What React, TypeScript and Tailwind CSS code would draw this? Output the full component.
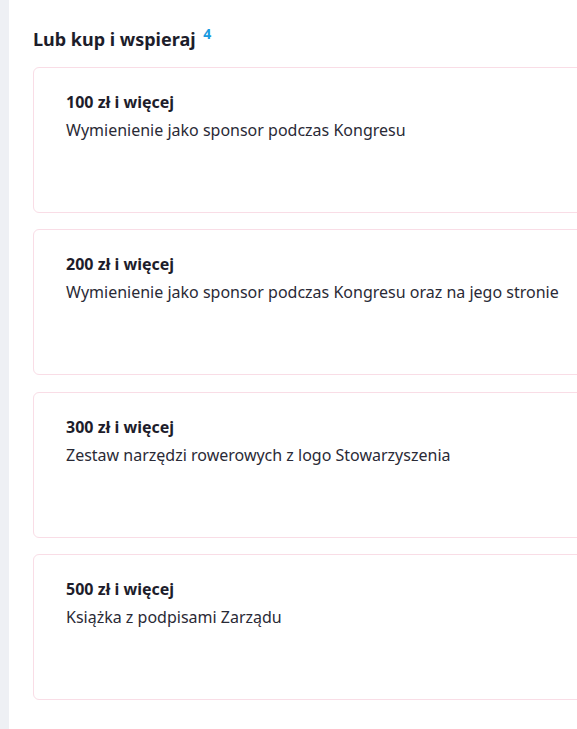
import React from 'react'

type Reward = {
    amount: number,
    description: string,
}

const rewards: Reward[] = [
    { amount: 100, description: 'Wymienienie jako sponsor podczas Kongresu' },
    { amount: 200, description: 'Wymienienie jako sponsor podczas Kongresu oraz na jego stronie' },
    { amount: 300, description: 'Zestaw narzędzi rowerowych z logo Stowarzyszenia' },
    { amount: 500, description: 'Książka z podpisami Zarządu' },
]

function RewardCard({ reward }: { reward: Reward }) {
  return (
    <div className='w-[600px] h-[146px] shrink-0 rounded-md border border-[#f9dde6] bg-white pl-[32px] pt-[23px]'>
      <p className='text-[16px] font-bold text-[#1d1d2b] leading-[22px]'>{reward.amount} zł i więcej</p>
      <p className='mt-[6px] text-[16px] text-[#2a2a36] leading-[22px]'>{reward.description}</p>
    </div>
  )
}

export default function App() {
  return (
    <div className='flex h-[729px] w-[577px] overflow-hidden bg-white' style={{ fontFamily: '"Noto Sans", Lato, sans-serif' }}>
      {/* left rail */}
      <div className='w-[9px] shrink-0 bg-[#eef0f4]'></div>
      <div className='flex flex-col pl-[24px] pt-[26px]'>
        <h2 className='text-[18px] font-bold text-[#1d1d2b] leading-[26px]'>
          Lub kup i wspieraj <sup className='ml-[3px] text-[14px] text-[#1a9be0] font-bold'>4</sup>
        </h2>
        <div className='mt-[15px] flex flex-col gap-[16.4px]'>
          {rewards.map((reward) => (
            <RewardCard key={reward.amount} reward={reward} />
          ))}
        </div>
      </div>
    </div>
  )
}
